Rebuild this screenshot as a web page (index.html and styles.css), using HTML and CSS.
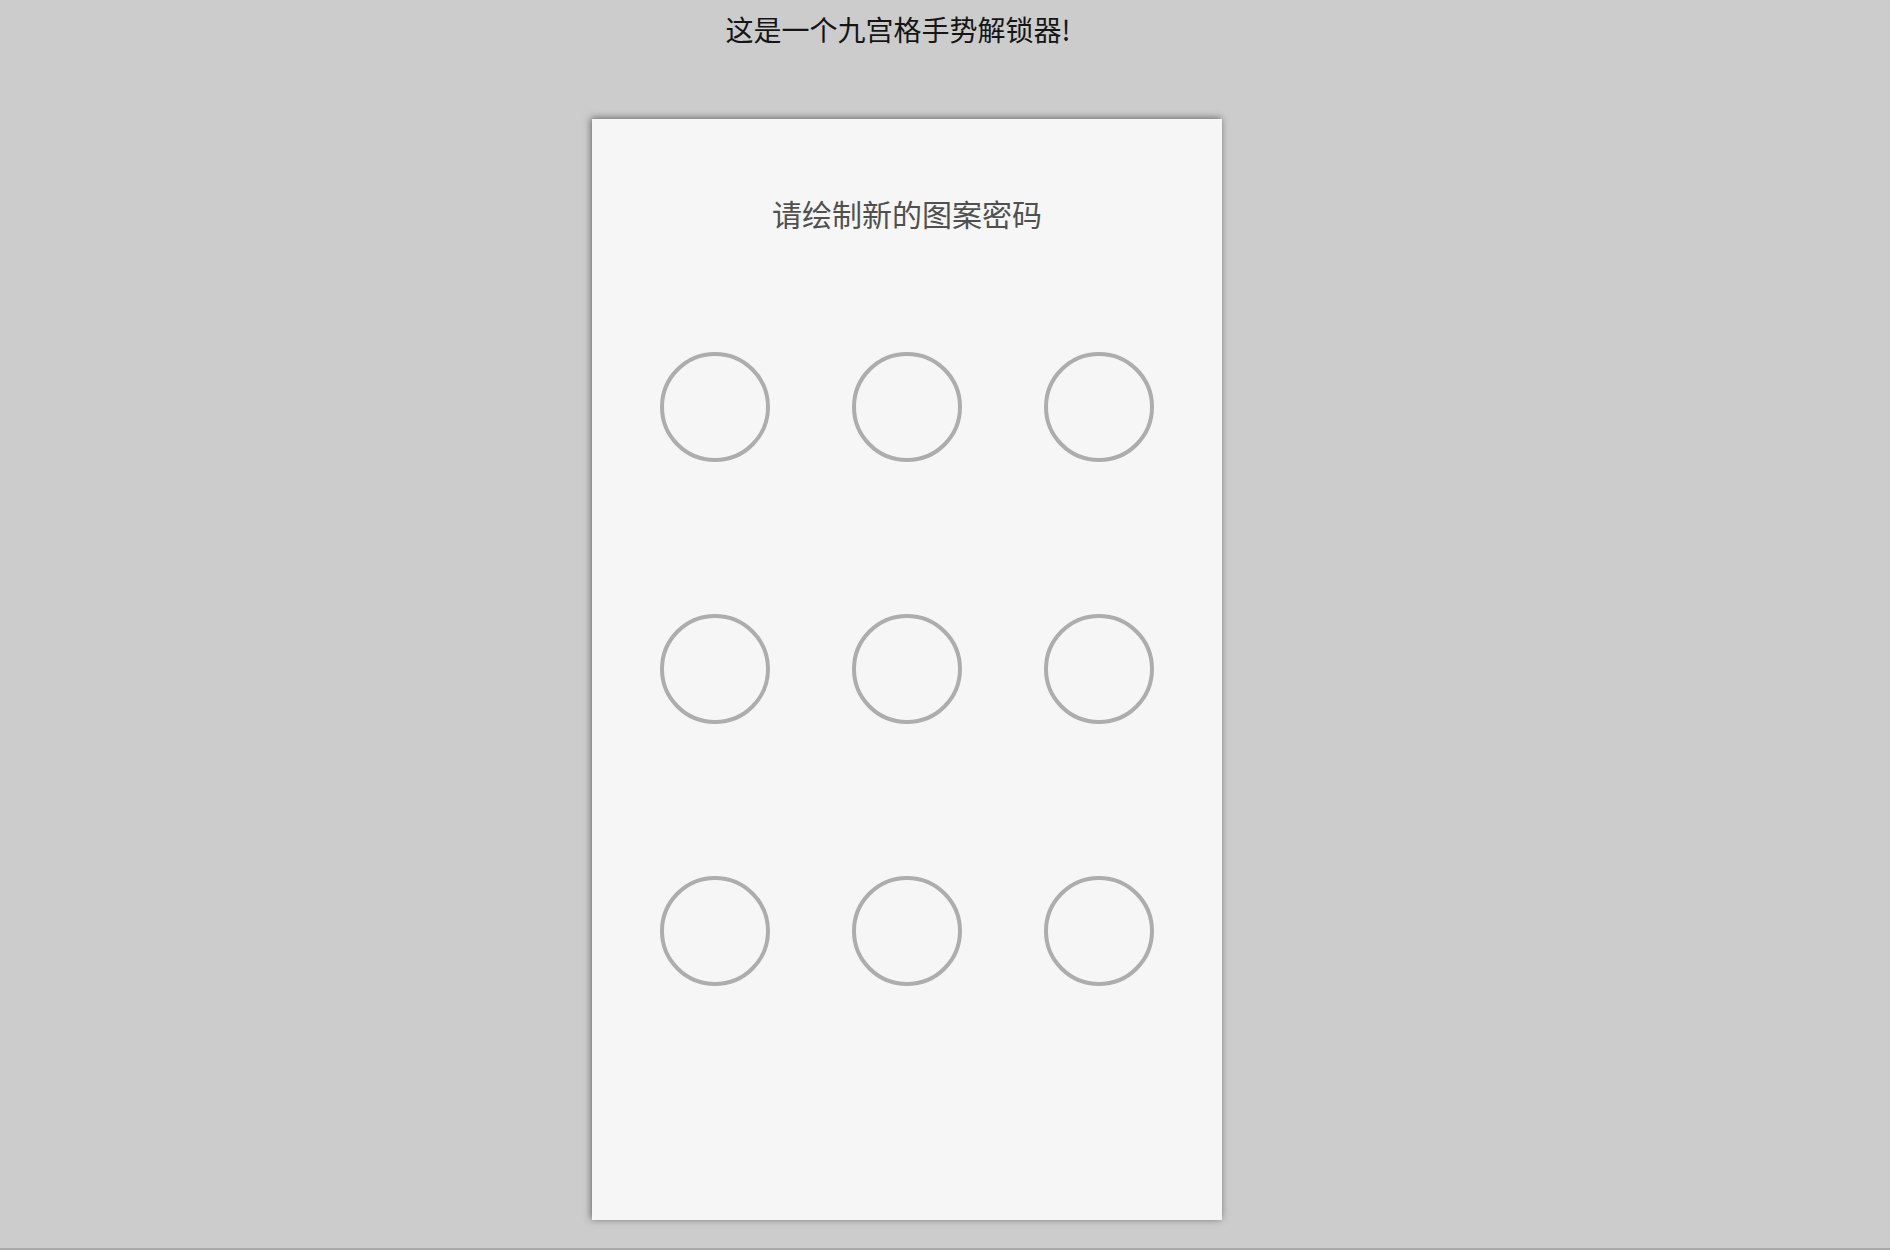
FILE: index.html
```html
<!DOCTYPE html>
<html lang="zh-CN">
<head>
<meta charset="utf-8">
<title>九宫格手势解锁</title>
<link rel="stylesheet" href="styles.css">
</head>
<body>
<div class="page">
  <h1 class="title">这是一个九宫格手势解锁器!</h1>
  <div class="card">
    <p class="hint">请绘制新的图案密码</p>
    <div class="grid">
      <div class="dot"></div><div class="dot"></div><div class="dot"></div>
      <div class="dot"></div><div class="dot"></div><div class="dot"></div>
      <div class="dot"></div><div class="dot"></div><div class="dot"></div>
    </div>
  </div>
</div>
</body>
</html>
```
FILE: styles.css
```css
html, body {
  margin: 0;
  padding: 0;
}
body {
  background: #cccccc;
  height: 1248px;
  border-bottom: 2px solid #a9a9a9;
  overflow: hidden;
  font-family: "Noto Sans CJK SC", "Noto Sans", sans-serif;
}
.page {
  width: 1796px;
}
.title {
  margin: 0;
  font-size: 28px;
  font-weight: 400;
  line-height: 58px;
  text-align: center;
  color: #151515;
}
.card {
  margin-top: 61px;
  margin-left: 592px;
  width: 630px;
  height: 1101px;
  background: #f6f6f6;
  box-shadow: -1px -1px 7px rgba(0, 0, 0, 0.5);
  overflow: hidden;
}
.hint {
  margin: 0;
  padding-top: 74px;
  font-size: 30px;
  line-height: 40px;
  text-align: center;
  color: #505050;
}
.grid {
  margin-top: 119px;
  display: grid;
  grid-template-columns: repeat(3, 110px);
  grid-auto-rows: 110px;
  column-gap: 82px;
  row-gap: 152px;
  justify-content: center;
}
.dot {
  box-sizing: border-box;
  width: 110px;
  height: 110px;
  border: 4px solid #adadad;
  border-radius: 50%;
}
```
